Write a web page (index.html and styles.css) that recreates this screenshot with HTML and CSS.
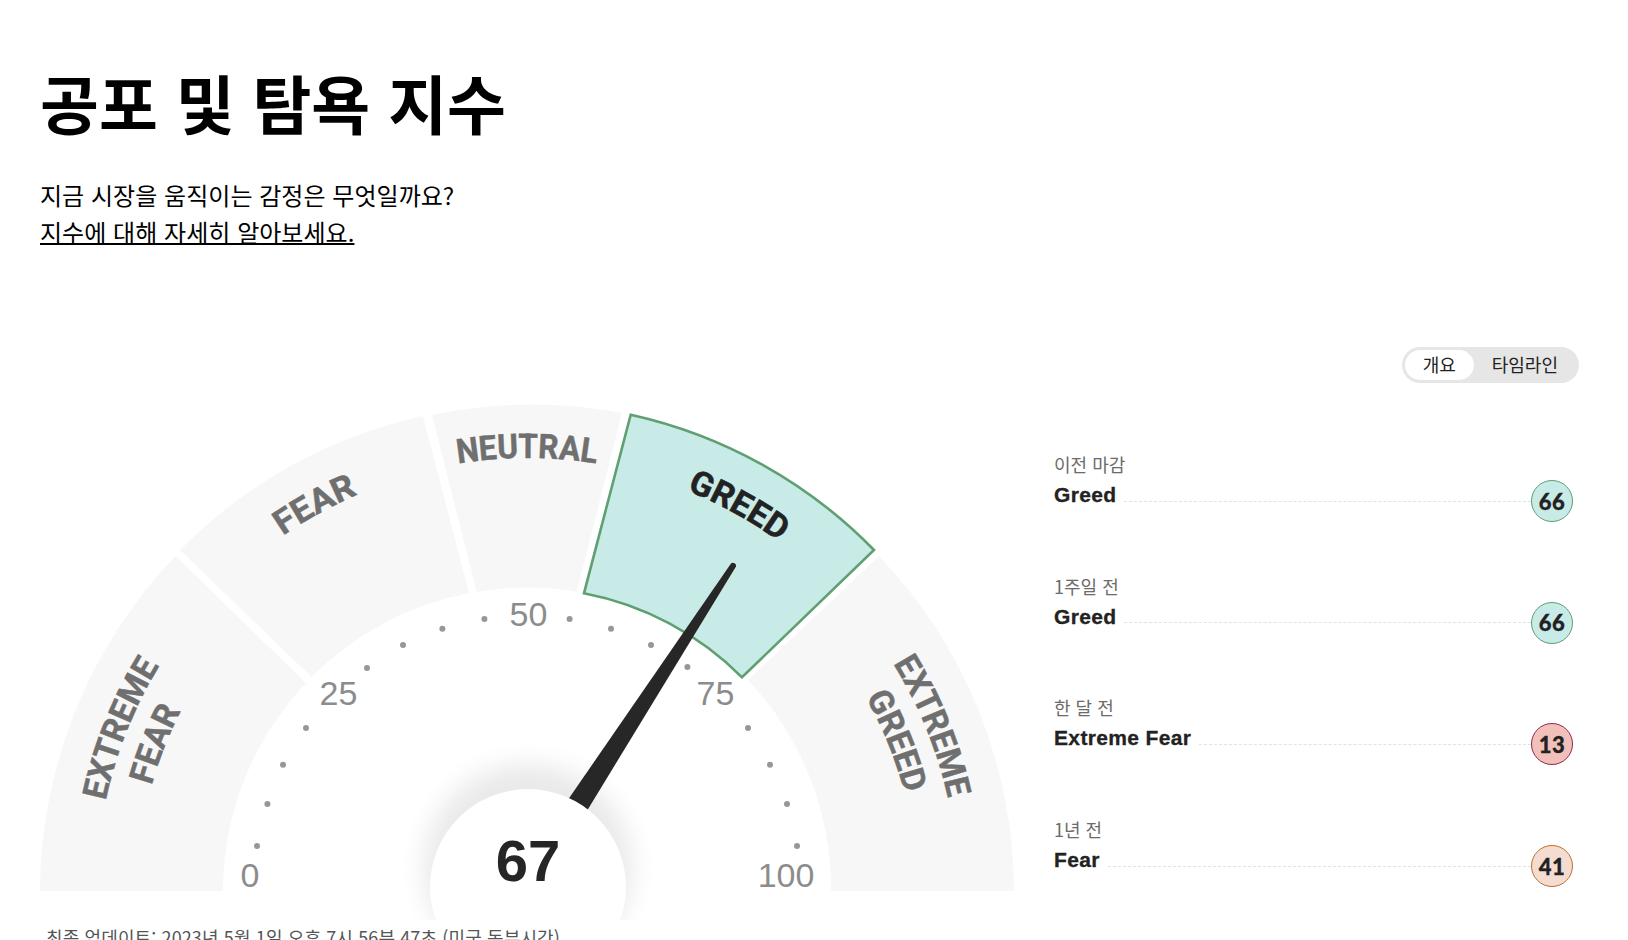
FILE: index.html
```html
<!DOCTYPE html>
<html lang="ko">
<head>
<meta charset="utf-8">
<title>공포 및 탐욕 지수</title>
<link rel="stylesheet" href="styles.css">
</head>
<body>
<main class="page">
  <header class="intro">
    <h1 class="title">공포 및 탐욕 지수</h1>
    <p class="lede">지금 시장을 움직이는 감정은 무엇일까요?<br><a class="lede-link" href="#">지수에 대해 자세히 알아보세요.</a></p>
  </header>
  <section class="content">
    <div class="gauge-col">
      <svg class="gauge" viewBox="40 400 980 520" width="980" height="520" role="img" aria-label="Fear and Greed gauge">
        <defs>
          <path id="r431" d="M96 891A431 431 0 0 1 958 891"/>
          <path id="r433" d="M94 891A433 433 0 0 1 960 891"/>
          <path id="r390" d="M137 891A390 390 0 0 1 917 891"/>
          <filter id="halo" x="-30%" y="-30%" width="160%" height="160%">
            <feGaussianBlur stdDeviation="12"/>
          </filter>
        </defs>
        <path class="seg" d="M40 891A487 487 0 0 1 175.5 556L306 683A304 304 0 0 0 223 891Z"/>
        <path class="seg" d="M180 550A487 487 0 0 1 423 416L469 593A304 304 0 0 0 311.5 677Z"/>
        <path class="seg" d="M432 415A487 487 0 0 1 622 413L576.7 591.7A304 304 0 0 0 476.6 591.7Z"/>
        <path class="seg seg-on" d="M630.7 414.7A487 487 0 0 1 874 550L742 677.3A304 304 0 0 0 584 593.3Z"/>
        <path class="seg" d="M879 556A487 487 0 0 1 1014 891L831 891A304 304 0 0 0 748 680Z"/>

        <text class="zone"><textPath href="#r431" startOffset="12.1%" textLength="146" lengthAdjust="spacingAndGlyphs">EXTREME</textPath></text>
        <text class="zone"><textPath href="#r390" startOffset="12%" textLength="80" lengthAdjust="spacingAndGlyphs">FEAR</textPath></text>
        <text class="zone"><textPath href="#r431" startOffset="34%" textLength="86" lengthAdjust="spacingAndGlyphs">FEAR</textPath></text>
        <text class="zone"><textPath href="#r433" startOffset="50%" textLength="139" lengthAdjust="spacingAndGlyphs">NEUTRAL</textPath></text>
        <text class="zone zone-on"><textPath href="#r431" startOffset="66%" textLength="106" lengthAdjust="spacingAndGlyphs">GREED</textPath></text>
        <text class="zone"><textPath href="#r431" startOffset="87.7%" textLength="146" lengthAdjust="spacingAndGlyphs">EXTREME</textPath></text>
        <text class="zone"><textPath href="#r390" startOffset="87.7%" textLength="104" lengthAdjust="spacingAndGlyphs">GREED</textPath></text>

        <g class="ticks">
          <circle cx="257" cy="846" r="3"/><circle cx="267.4" cy="804" r="3"/><circle cx="283" cy="764.7" r="3"/><circle cx="306" cy="728" r="3"/>
          <circle cx="367" cy="668" r="3"/><circle cx="403" cy="645" r="3"/><circle cx="442.4" cy="628.7" r="3"/><circle cx="484.4" cy="619" r="3"/>
          <circle cx="569.6" cy="619" r="3"/><circle cx="611" cy="628.7" r="3"/><circle cx="651" cy="645" r="3"/><circle cx="687.4" cy="667" r="3"/>
          <circle cx="748" cy="728" r="3"/><circle cx="770" cy="764.7" r="3"/><circle cx="787" cy="804" r="3"/><circle cx="797" cy="846" r="3"/>
        </g>
        <text class="tick-label" x="250" y="887">0</text>
        <text class="tick-label" x="338.5" y="705">25</text>
        <text class="tick-label" x="528.5" y="626">50</text>
        <text class="tick-label" x="715.5" y="705">75</text>
        <text class="tick-label" x="786" y="887">100</text>

        <circle class="halo" cx="528" cy="868" r="104" filter="url(#halo)"/>
        <path class="needle" d="M553.5 820.7L731 563.4A3.2 3.2 0 0 1 736 566.6L573.3 833.2Z"/>
        <circle class="hub" cx="528" cy="887" r="98"/>
        <text class="score" x="528" y="881">67</text>
      </svg>
      <p class="updated">최종 업데이트: 2023년 5월 1일 오후 7시 56분 47초 (미국 동부시간)</p>
    </div>
    <aside class="side">
      <div class="toggle">
        <span class="toggle-item toggle-on">개요</span>
        <span class="toggle-item">타임라인</span>
      </div>
      <ul class="history">
        <li class="entry">
          <div class="when">이전 마감</div>
          <div class="row"><span class="state">Greed</span><span class="rule"></span><span class="badge badge-greed">66</span></div>
        </li>
        <li class="entry">
          <div class="when">1주일 전</div>
          <div class="row"><span class="state">Greed</span><span class="rule"></span><span class="badge badge-greed">66</span></div>
        </li>
        <li class="entry">
          <div class="when">한 달 전</div>
          <div class="row"><span class="state">Extreme Fear</span><span class="rule"></span><span class="badge badge-xfear">13</span></div>
        </li>
        <li class="entry">
          <div class="when">1년 전</div>
          <div class="row"><span class="state">Fear</span><span class="rule"></span><span class="badge badge-fear">41</span></div>
        </li>
      </ul>
    </aside>
  </section>
</main>
</body>
</html>
```
FILE: styles.css
```css
html, body { margin: 0; padding: 0; height: 940px; overflow: hidden; background: #fff; }
body { font-family: "Liberation Sans", "Noto Sans CJK KR", sans-serif; color: #000; }
.page { padding: 0 49px 0 40px; }
.intro { height: 347px; padding-top: 62px; box-sizing: border-box; }
.title { margin: 0; font-family: "Noto Sans CJK KR", sans-serif; font-weight: 700; font-size: 64px; line-height: 78px; }
.lede { margin: 36px 0 0; font-family: "Noto Sans CJK KR", sans-serif; font-size: 24px; line-height: 37px; letter-spacing: 0.03px; }
.lede-link { color: #000; text-decoration: underline; text-decoration-thickness: 2px; }
.content { display: flex; align-items: flex-start; }
.gauge-col { width: 1014px; flex: none; padding-top: 53px; }
.gauge { display: block; overflow: hidden; }
.seg { fill: #f7f7f7; }
.seg-on { fill: #c9ebe8; stroke: #5f9f72; stroke-width: 2.6; stroke-linejoin: miter; }
.zone { font-family: "Roboto", "Liberation Sans", sans-serif; font-weight: 700; font-size: 34px; fill: #6f6f6f; stroke: #6f6f6f; stroke-width: 0.5; text-anchor: middle; }
.zone-on { fill: #222; stroke: #222; }
.ticks { fill: #979797; }
.tick-label { font-family: "Liberation Sans", sans-serif; font-size: 34px; fill: #8c8c8c; text-anchor: middle; }
.halo { fill: #e9e9e9; }
.hub { fill: #fff; }
.needle { fill: #272727; }
.score { font-family: "Liberation Sans", sans-serif; font-weight: 700; font-size: 58px; fill: #262626; text-anchor: middle; }
.updated { margin: 5px 0 0 6px; font-family: "Noto Sans CJK KR", sans-serif; font-size: 18px; line-height: 24px; letter-spacing: 0.12px; color: #555; white-space: nowrap; }
.side { flex: 1; display: flex; flex-direction: column; }
.toggle { align-self: flex-end; display: flex; align-items: center; height: 36px; box-sizing: border-box; padding: 3px; background: #e6e6e6; border-radius: 18px; font-family: "Noto Sans CJK KR", sans-serif; font-size: 18px; color: #222; }
.toggle-item { display: flex; align-items: center; justify-content: center; height: 30px; padding: 0 18px 3px; box-sizing: border-box; border-radius: 15px; }
.toggle-on { background: #fff; }
.history { list-style: none; margin: 69px 0 0; padding: 0; display: flex; flex-direction: column; gap: 51.7px; }
.entry { display: flex; flex-direction: column; gap: 4px; padding-right: 6px; }
.when { font-family: "Noto Sans CJK KR", sans-serif; font-size: 18px; line-height: 24px; color: #6b6b6b; }
.row { display: flex; align-items: center; height: 42px; }
.state { font-weight: 700; font-size: 21px; line-height: 24px; letter-spacing: 0.35px; color: #222; padding-bottom: 12px; -webkit-text-stroke: 0.3px #222; }
.rule { flex: 1; margin: 0 0 0 8px; border-top: 1px dashed #e2e2e2; }
.badge { width: 42px; height: 42px; box-sizing: border-box; border-radius: 50%; border: 1px solid; display: flex; align-items: center; justify-content: center; font-family: Lato, sans-serif; font-weight: 900; font-size: 22px; letter-spacing: 0.6px; color: #222; -webkit-text-stroke: 0.3px #222; }
.badge-greed { background: #c9ebe8; border-color: #5f9f72; }
.badge-xfear { background: #f1c0bb; border-color: #8f2c42; }
.badge-fear { background: #f5dcd0; border-color: #c0702f; }
```
